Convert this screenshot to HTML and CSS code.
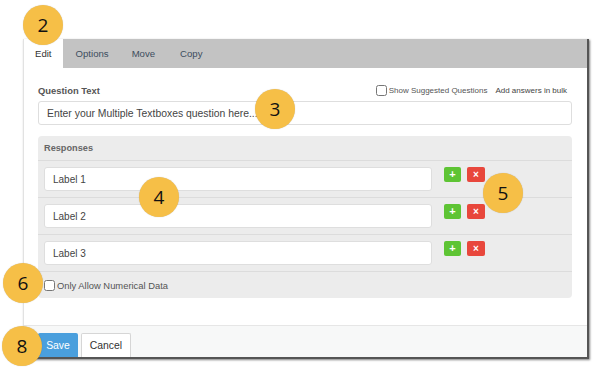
FILE: index.html
```html
<!DOCTYPE html>
<html lang="en">
<head>
    <meta charset="UTF-8">
    <title>Multiple Textboxes - Edit</title>
    <link rel="stylesheet" href="styles.css">
</head>
<body>
    <div class="stage">
        <div class="window">
            <div class="tabs">
                <div class="tab active">Edit</div>
                <div class="tab">Options</div>
                <div class="tab">Move</div>
                <div class="tab">Copy</div>
            </div>

            <div class="content">
                <div class="question-head">
                    <span class="field-label">Question Text</span>
                    <div class="question-tools">
                        <label class="check small"><input type="checkbox"> Show Suggested Questions</label>
                        <span class="bulk">Add answers in bulk</span>
                    </div>
                </div>
                <input class="text-input question" type="text" placeholder="Enter your Multiple Textboxes question here...">

                <div class="responses">
                    <div class="responses-head">Responses</div>
                    <div class="row">
                        <input class="text-input label-input" type="text" placeholder="Label 1">
                        <span class="btn-add">+</span>
                        <span class="btn-del">&times;</span>
                    </div>
                    <div class="row">
                        <input class="text-input label-input" type="text" placeholder="Label 2">
                        <span class="btn-add">+</span>
                        <span class="btn-del">&times;</span>
                    </div>
                    <div class="row">
                        <input class="text-input label-input" type="text" placeholder="Label 3">
                        <span class="btn-add">+</span>
                        <span class="btn-del">&times;</span>
                    </div>
                    <div class="row numeric">
                        <label class="check"><input type="checkbox"> Only Allow Numerical Data</label>
                    </div>
                </div>
            </div>

            <div class="footer">
                <button class="btn-save">Save</button>
                <button class="btn-cancel">Cancel</button>
            </div>
        </div>

        <!-- callout markers -->
        <span class="badge b2">2</span>
        <span class="badge b3">3</span>
        <span class="badge b4">4</span>
        <span class="badge b5">5</span>
        <span class="badge b6">6</span>
        <span class="badge b8">8</span>
    </div>
</body>
</html>
```

FILE: styles.css
```css
* {
    margin: 0;
    padding: 0;
    box-sizing: border-box;
}

body {
    font-family: "Liberation Sans", Arial, sans-serif;
    background: #fff;
    color: #333;
}

.stage {
    position: relative;
    width: 600px;
    height: 374px;
    padding: 39px 0 0 23px;
}

.window {
    width: 566px;
    height: 320px;
    background: #fff;
    border-left: 1px solid #e2e2e2;
    border-right: 2px solid #555;
    border-bottom: 2px solid #555;
    box-shadow: 1px 1px 2px rgba(0,0,0,0.5);
    display: flex;
    flex-direction: column;
}

.tabs {
    display: flex;
    height: 29px;
    background: #c3c3c3;
}

.tab {
    padding: 0 12px;
    line-height: 29px;
    font-size: 9.6px;
    color: #3d4d5e;
}

.tab.active {
    background: #fff;
    color: #333;
    padding: 0 11px 0 11px;
}

.tab:nth-child(2) {
    padding: 0 11px 0 13px;
}

.tab:nth-child(4) {
    padding-left: 13px;
}

.content {
    flex: 1;
    padding: 14px 15px 0 14px;
}

.question-head {
    display: flex;
    justify-content: space-between;
    align-items: center;
    height: 16px;
    margin-bottom: 3px;
}

.field-label {
    font-size: 9.4px;
    font-weight: bold;
    color: #555;
}

.question-tools {
    display: flex;
    align-items: center;
    gap: 8px;
    font-size: 8px;
    color: #444;
    padding-right: 5px;
}

.check {
    display: flex;
    align-items: center;
    gap: 2px;
    font-size: 9.4px;
    color: #555;
}

.check input {
    width: 11px;
    height: 11px;
    margin: 0;
}

.check.small {
    font-size: 8px;
}

.text-input {
    display: block;
    height: 24px;
    border: 1px solid #dedede;
    border-radius: 3px;
    background: #fff;
    padding: 0 8px;
    font-family: inherit;
    font-size: 10.4px;
    color: #333;
}

.text-input::placeholder {
    color: #444;
}

.question {
    width: 534px;
}

.label-input {
    width: 388px;
    margin-right: 12px;
    font-size: 10px;
}

.responses {
    margin-top: 11px;
    width: 534px;
    background: #ececec;
    border-radius: 4px;
}

.responses-head {
    height: 25px;
    line-height: 24px;
    padding-left: 6px;
    font-size: 9.2px;
    font-weight: bold;
    color: #666;
    border-bottom: 1px solid #dcdcdc;
}

.row {
    display: flex;
    align-items: flex-start;
    height: 37px;
    padding: 6px 6px 0 6px;
    border-bottom: 1px solid #dcdcdc;
}

.btn-add,
.btn-del {
    width: 17px;
    height: 15px;
    border-radius: 2px;
    color: #fff;
    font-weight: bold;
    text-align: center;
    line-height: 15px;
    font-size: 11px;
}

.btn-add {
    background: #5ec434;
    margin-right: 6px;
}

.btn-del {
    background: #e8473c;
    width: 18px;
    font-size: 10px;
}

.row.numeric {
    height: 26px;
    border-bottom: none;
    align-items: center;
    padding-top: 0;
}

.footer {
    height: 32px;
    background: #f7f8f8;
    border-top: 1px solid #e6e6e6;
    display: flex;
    align-items: flex-end;
    padding-left: 14px;
    gap: 3px;
}

.footer button {
    height: 24px;
    font-family: inherit;
    font-size: 10.4px;
    border-radius: 2px 2px 0 0;
}

.btn-save {
    width: 40px;
    background: #4a9fdd;
    color: #fff;
    border: none;
}

.btn-cancel {
    width: 50px;
    background: #fff;
    color: #333;
    border: 1px solid #d6d6d6;
    border-bottom: none;
}

.badge {
    position: absolute;
    width: 40px;
    height: 40px;
    border-radius: 50%;
    background: #f6bf47;
    box-shadow: 0 0 1px rgba(0,0,0,0.25);
    font-family: "Open Sans", sans-serif;
    font-size: 19px;
    line-height: 40px;
    text-align: center;
    color: #111;
}

.b2 { left: 23px; top: 5px; }
.b3 { left: 255px; top: 89px; }
.b4 { left: 139px; top: 177px; }
.b5 { left: 483px; top: 173px; }
.b6 { left: 3px; top: 263px; }
.b8 { left: 2px; top: 326px; }
```
